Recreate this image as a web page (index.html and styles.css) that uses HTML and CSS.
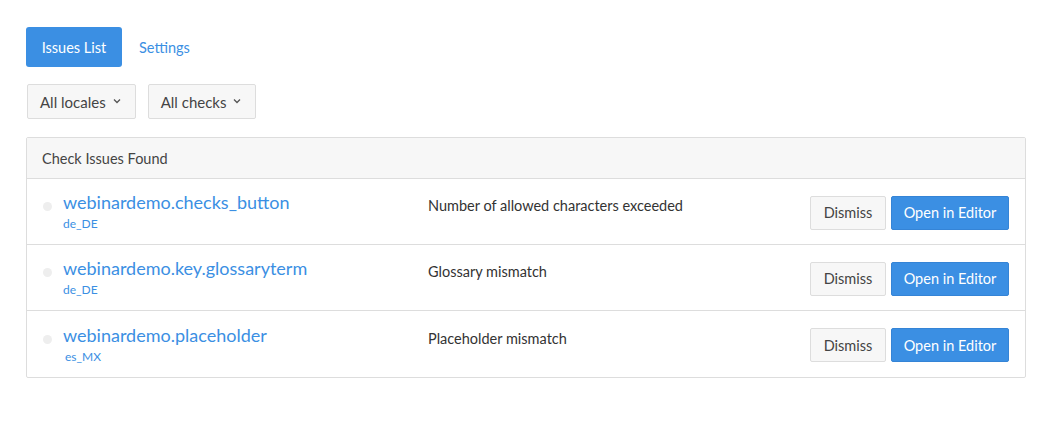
FILE: index.html
```html
<!DOCTYPE html>
<html>
<head>
<meta charset="utf-8">
<link rel="stylesheet" href="styles.css">
</head>
<body>
<div class="page">
  <nav class="tabs">
    <a class="tab active">Issues List</a>
    <a class="tab">Settings</a>
  </nav>
  <div class="filters">
    <button class="select">All locales <span class="caret"><svg width="8" height="6" viewBox="0 0 8 6"><path d="M1 1.5 L4 4.5 L7 1.5" fill="none" stroke="#555" stroke-width="1.3"/></svg></span></button>
    <button class="select">All checks <span class="caret"><svg width="8" height="6" viewBox="0 0 8 6"><path d="M1 1.5 L4 4.5 L7 1.5" fill="none" stroke="#555" stroke-width="1.3"/></svg></span></button>
  </div>
  <div class="panel">
    <div class="panel-head">Check Issues Found</div>
    <div class="row">
      <span class="dot"></span>
      <div class="key">
        <a class="key-name">webinardemo.checks_button</a>
        <span class="locale">de_DE</span>
      </div>
      <div class="issue">Number of allowed characters exceeded</div>
      <div class="actions">
        <button class="btn btn-default">Dismiss</button>
        <button class="btn btn-primary">Open in Editor</button>
      </div>
    </div>
    <div class="row">
      <span class="dot"></span>
      <div class="key">
        <a class="key-name">webinardemo.key.glossaryterm</a>
        <span class="locale">de_DE</span>
      </div>
      <div class="issue">Glossary mismatch</div>
      <div class="actions">
        <button class="btn btn-default">Dismiss</button>
        <button class="btn btn-primary">Open in Editor</button>
      </div>
    </div>
    <div class="row">
      <span class="dot"></span>
      <div class="key">
        <a class="key-name">webinardemo.placeholder</a>
        <span class="locale indent">es_MX</span>
      </div>
      <div class="issue">Placeholder mismatch</div>
      <div class="actions">
        <button class="btn btn-default">Dismiss</button>
        <button class="btn btn-primary">Open in Editor</button>
      </div>
    </div>
  </div>
</div>
</body>
</html>
```
FILE: styles.css
```css
* { box-sizing: border-box; }
body {
  margin: 0;
  background: #fff;
  font-family: "Lato", "Open Sans", sans-serif;
  color: #333;
}
.page {
  padding: 27px 34px 0 26px;
}
.tabs {
  display: flex;
  align-items: center;
  height: 40px;
}
.tab {
  display: flex;
  align-items: center;
  height: 40px;
  padding: 0 17px;
  font-size: 14.5px;
  color: #3b8fe3;
  border-radius: 3px;
}
.tab.active {
  background: #3b8fe3;
  color: #fff;
  width: 96px;
  justify-content: center;
  padding: 0;
}
.filters {
  display: flex;
  gap: 12px;
  margin-top: 17px;
  margin-left: 1px;
}
.select {
  height: 35px;
  padding: 0 14px 0 12px;
  background: #f7f7f7;
  border: 1px solid #ddd;
  border-radius: 2px;
  font-family: inherit;
  font-size: 15px;
  color: #444;
  display: flex;
  align-items: center;
  gap: 7px;
}
.caret { display: inline-flex; margin-top: -2px; }
.panel {
  margin-top: 18px;
  border: 1px solid #ddd;
  border-radius: 2px;
  width: 1000px;
}
.panel-head {
  height: 41px;
  background: #f7f7f7;
  border-bottom: 1px solid #ddd;
  display: flex;
  align-items: center;
  padding-left: 15px;
  font-size: 14.5px;
  color: #444;
}
.row {
  display: flex;
  align-items: center;
  height: 66px;
  border-bottom: 1px solid #ddd;
  padding: 0 16px;
}
.row:last-child { border-bottom: none; }
.dot {
  width: 9px;
  height: 9px;
  border-radius: 50%;
  background: #eeeeee;
  flex: none;
  margin-right: 11px;
  margin-top: -10px;
}
.key {
  display: flex;
  flex-direction: column;
  width: 365px;
}
.key-name {
  font-size: 18px;
  color: #3b8fe3;
  line-height: 22px;
}
.locale {
  font-size: 12px;
  color: #3b8fe3;
  line-height: 16px;
  margin-top: 3px;
}
.locale.indent { padding-left: 2px; }
.issue {
  flex: 1;
  font-size: 14.5px;
  color: #333;
  margin-top: -12px;
}
.actions {
  display: flex;
  gap: 5px;
  margin-top: 2px;
}
.btn {
  height: 34px;
  border-radius: 2px;
  font-family: inherit;
  font-size: 14.5px;
  padding: 0;
}
.btn-default {
  background: #f7f7f7;
  border: 1px solid #ddd;
  color: #444;
  width: 76px;
}
.btn-primary {
  background: #3b8fe3;
  border: 1px solid #3584d6;
  color: #fff;
  width: 118px;
}
```
